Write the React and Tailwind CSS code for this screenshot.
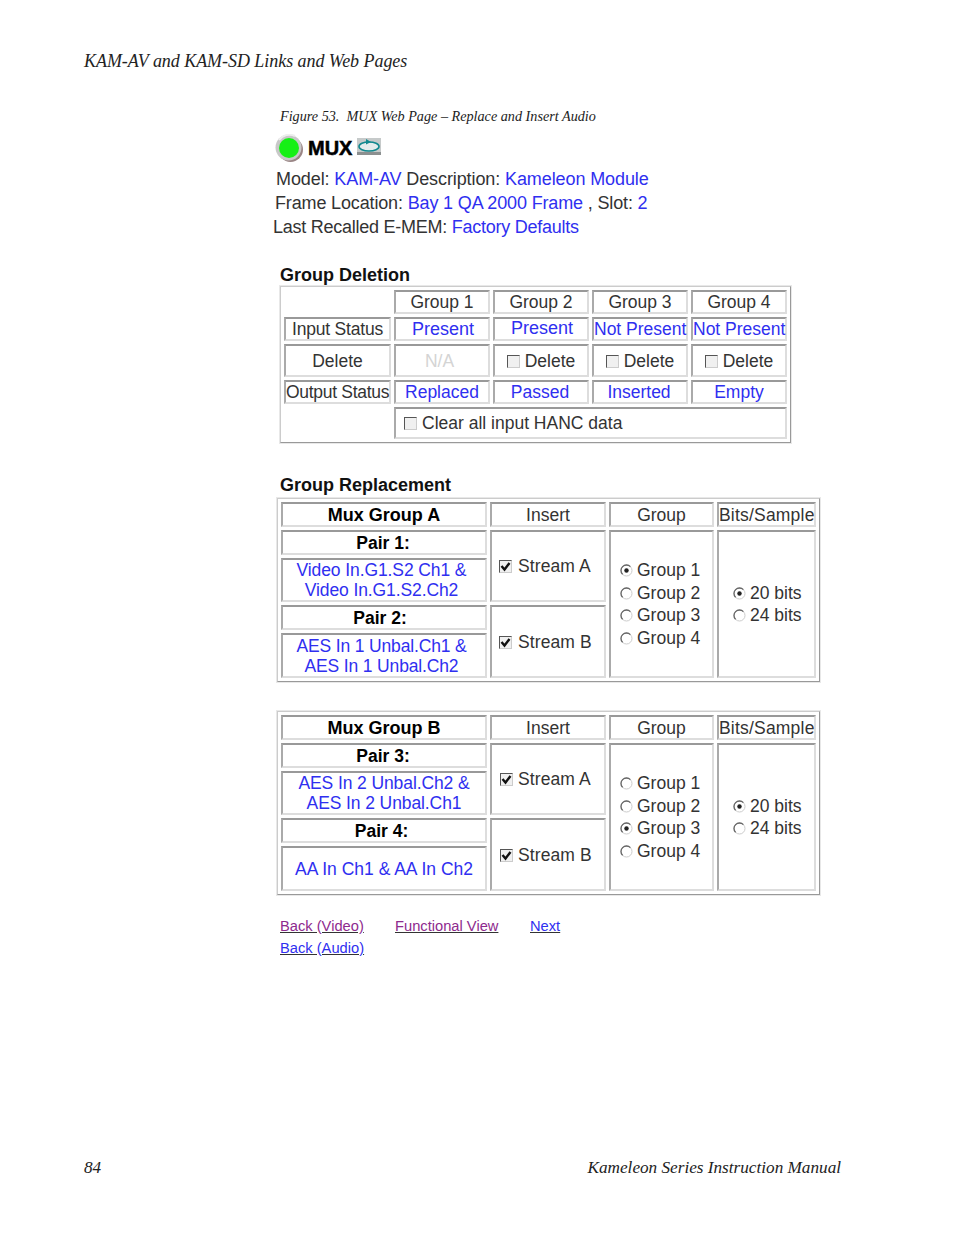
const blue = 'text-[#2f2ff0]';
const cell = 'border-2 border-t-[#999] border-l-[#aaa] border-r-[#ddd] border-b-[#ddd] p-0 text-center align-middle leading-[20px]';
const outer = 'table-fixed border-separate border-spacing-[3px] border border-t-[#ccc] border-l-[#ccc] border-r-[#999] border-b-[#999] shadow-[0_0_0_1px_#e8e8e8]';

const Check = ({ on, gap = 'mr-[5px]' }) => (
  <span className={`inline-block w-[13px] h-[13px] border border-t-[#555] border-l-[#555] border-r-[#ccc] border-b-[#ccc] bg-[#f0f0f0] align-[-1px] ${gap}`}>
    {on && (
      <svg viewBox="0 0 11 11" className="w-[11px] h-[11px]">
        <path d="M1.5 5 L4.5 8.5 L9.5 2" fill="none" stroke="#111" strokeWidth="2.4" />
      </svg>
    )}
  </span>
);

const Radio = ({ on }) => (
  <svg viewBox="0 0 13 13" className="inline-block w-[13px] h-[13px] mr-[4px] align-[-1px]">
    <circle cx="6.5" cy="6.5" r="5.5" fill="#fff" stroke="#ccc" />
    <path d="M2.6 10.4 A5.5 5.5 0 0 1 10.4 2.6" fill="none" stroke="#666" strokeWidth="1.3" />
    {on && <circle cx="6.5" cy="6.5" r="2.2" fill="#222" />}
  </svg>
);

const DeletionTable = () => (
  <table className={`ml-[280px] w-[511px] ${outer}`}>
    <colgroup>
      <col className="w-[107px]" />
      <col />
      <col />
      <col />
      <col />
    </colgroup>
    <tbody>
      <tr className="h-[24px]">
        <td></td>
        <td className={cell}>Group 1</td>
        <td className={cell}>Group 2</td>
        <td className={cell}>Group 3</td>
        <td className={cell}>Group 4</td>
      </tr>
      <tr className="h-[24px]">
        <td className={`${cell} tracking-[-0.2px]`}>Input Status</td>
        <td className={`${cell} ${blue} text-[18px] pl-[2px]`}>Present</td>
        <td className={`${cell} ${blue} text-[18px] pl-[2px]`}><span className="relative -top-[1px]">Present</span></td>
        <td className={`${cell} ${blue} whitespace-nowrap pr-[4px]`}>Not Present</td>
        <td className={`${cell} ${blue} whitespace-nowrap`}>Not Present</td>
      </tr>
      <tr className="h-[33px]">
        <td className={cell}>Delete</td>
        <td className={`${cell} text-[#d4d4d4] pr-[5px]`}>N/A</td>
        <td className={cell}><Check />Delete</td>
        <td className={cell}><Check />Delete</td>
        <td className={cell}><Check />Delete</td>
      </tr>
      <tr className="h-[24px]">
        <td className={`${cell} tracking-[-0.3px] whitespace-nowrap pr-[2px]`}>Output Status</td>
        <td className={`${cell} ${blue}`}>Replaced</td>
        <td className={`${cell} ${blue} pr-[2px]`}>Passed</td>
        <td className={`${cell} ${blue} pr-[2px]`}>Inserted</td>
        <td className={`${cell} ${blue}`}>Empty</td>
      </tr>
      <tr className="h-[32px]">
        <td></td>
        <td colSpan={4} className={`${cell} text-left pl-[8px]`}><Check />Clear all input HANC data</td>
      </tr>
    </tbody>
  </table>
);

const MuxTable = ({ title, rows, group, bits, mt, boxShift, gapA, gapB }) => (
  <table className={`ml-[277px] w-[543px] ${outer} ${mt}`}>
    <colgroup>
      <col className="w-[206px]" />
      <col className="w-[116px]" />
      <col className="w-[105px]" />
      <col />
    </colgroup>
    <tbody>
      <tr className="h-[25px]">
        <td className={`${cell} font-bold text-[18px] text-black`}>{title}</td>
        <td className={cell}>Insert</td>
        <td className={cell}>Group</td>
        <td className={`${cell} whitespace-nowrap tracking-[0.2px]`}>Bits/Sample</td>
      </tr>
      <tr className="h-[25px]">
        <td className={`${cell} font-bold text-black ${rows[0].shift}`}>{rows[0].pair}</td>
        <td rowSpan={2} className={`${cell} text-left tracking-[0.1px] ${boxShift}`}><Check on gap={gapA} />Stream A</td>
        <td rowSpan={4} className={cell}>
          <div className="flex flex-col items-start pl-[9px] leading-[22.5px]">
            {[1, 2, 3, 4].map((n) => (
              <div key={n} className="whitespace-nowrap"><Radio on={group === n} />Group {n}</div>
            ))}
          </div>
        </td>
        <td rowSpan={4} className={cell}>
          <div className="flex flex-col items-start pl-[14px] leading-[22.5px]">
            <div className="whitespace-nowrap"><Radio on={bits === 20} />20 bits</div>
            <div className="whitespace-nowrap"><Radio on={bits === 24} />24 bits</div>
          </div>
        </td>
      </tr>
      <tr className="h-[44px]">
        <td className={`${cell} ${blue} ${rows[0].srcClass}`}>{rows[0].src}</td>
      </tr>
      <tr className="h-[25px]">
        <td className={`${cell} font-bold text-black ${rows[1].shift}`}>{rows[1].pair}</td>
        <td rowSpan={2} className={`${cell} text-left tracking-[0.1px] ${boxShift}`}><Check on gap={gapB} />Stream B</td>
      </tr>
      <tr className="h-[45px]">
        <td className={`${cell} ${blue} ${rows[1].srcClass}`}>{rows[1].src}</td>
      </tr>
    </tbody>
  </table>
);

export default function App() {
  return (
    <div className="h-[1235px] bg-white flex flex-col font-['Liberation_Sans',Arial,sans-serif] text-[17.5px] leading-[24px] text-[#333]">
      <div className="ml-[84px] mt-[49px] font-['Liberation_Serif',serif] italic text-[18px] text-[#222] tracking-[-0.05px]">
        KAM-AV and KAM-SD Links and Web Pages
      </div>
      <div className="ml-[280px] mt-[33px] font-['Liberation_Serif',serif] italic text-[14.2px] leading-[20px] text-[#222]">
        Figure 53.&nbsp; MUX Web Page – Replace and Insert Audio
      </div>

      <div className="ml-[275px] mt-[7px] flex items-center h-[30px]">
        <svg viewBox="0 0 28 28" className="w-[28px] h-[28px]">
          <circle cx="15.5" cy="15.5" r="12.5" fill="#9a8585" />
          <circle cx="13.5" cy="13.5" r="13" fill="#c8c8c8" />
          <path d="M4 6 A13 13 0 0 1 20 2" fill="none" stroke="#eeeeee" strokeWidth="2" />
          <circle cx="14" cy="14" r="10" fill="#16f016" />
        </svg>
        <span className="ml-[5px] font-bold text-[20px] text-black [-webkit-text-stroke:0.5px_black]">MUX</span>
        <svg viewBox="0 0 24 17" className="ml-[5px] w-[24px] h-[17px] -mt-[3px]">
          <rect width="24" height="17" fill="#c6caca" />
          <rect y="14" width="24" height="3" fill="#8c9090" />
          <ellipse cx="12" cy="8.5" rx="10" ry="4.5" fill="#e4ecec" stroke="#12898f" strokeWidth="1.6" />
          <path d="M9 1 L14 4 L9 6.5 Z" fill="#12898f" />
        </svg>
      </div>

      <div className="mt-[4px] text-[18px]">
        <div className="ml-[276px] tracking-[-0.1px]">Model: <span className={blue}>KAM-AV</span> Description: <span className={blue}>Kameleon Module</span></div>
        <div className="ml-[275px] tracking-[-0.15px]">Frame Location: <span className={blue}>Bay 1 QA 2000 Frame</span> , Slot: <span className={blue}>2</span></div>
        <div className="ml-[273px] tracking-[-0.25px]">Last Recalled E-MEM: <span className={blue}>Factory Defaults</span></div>
      </div>

      <h2 className="ml-[280px] mt-[25px] font-bold text-[18px] leading-[22px] text-[#111]">Group Deletion</h2>
      <DeletionTable />

      <h2 className="ml-[280px] mt-[31px] font-bold text-[18px] leading-[22px] text-[#111]">Group Replacement</h2>
      <MuxTable
        title="Mux Group A"
        group={1}
        bits={20}
        mt="mt-[2px]"
        boxShift="pl-[7px]"
        gapA="mr-[6px]"
        gapB="mr-[6px]"
        rows={[
          { pair: 'Pair 1:', shift: 'pr-[2px]', srcClass: 'pr-[5px] tracking-[-0.1px]', src: <>Video In.G1.S2 Ch1 &amp;<br />Video In.G1.S2.Ch2</> },
          { pair: 'Pair 2:', shift: 'pr-[8px]', srcClass: 'pr-[5px] tracking-[-0.15px]', src: <>AES In 1 Unbal.Ch1 &amp;<br />AES In 1 Unbal.Ch2</> },
        ]}
      />
      <MuxTable
        title="Mux Group B"
        group={3}
        bits={20}
        mt="mt-[29px]"
        boxShift="pl-[8px]"
        gapA="mr-[5px]"
        gapB="mr-[5px]"
        rows={[
          { pair: 'Pair 3:', shift: 'pr-[2px]', srcClass: 'tracking-[-0.1px]', src: <>AES In 2 Unbal.Ch2 &amp;<br />AES In 2 Unbal.Ch1</> },
          { pair: 'Pair 4:', shift: 'pr-[5px]', srcClass: '', src: <>AA In Ch1 &amp; AA In Ch2</> },
        ]}
      />

      <div className="ml-[280px] mt-[20px] text-[14.7px] leading-[22px] underline">
        <div className="flex">
          <span className="text-[#8e2a8e] w-[115px]">Back (Video)</span>
          <span className="text-[#8e2a8e] w-[135px]">Functional View</span>
          <span className="text-[#2f2ff0]">Next</span>
        </div>
        <div className="text-[#2f2ff0]">Back (Audio)</div>
      </div>

      <div className="mt-auto mb-[55px] ml-[84px] mr-[113px] flex justify-between font-['Liberation_Serif',serif] italic text-[17.2px] text-[#222]">
        <span>84</span>
        <span>Kameleon Series Instruction Manual</span>
      </div>
    </div>
  );
}
